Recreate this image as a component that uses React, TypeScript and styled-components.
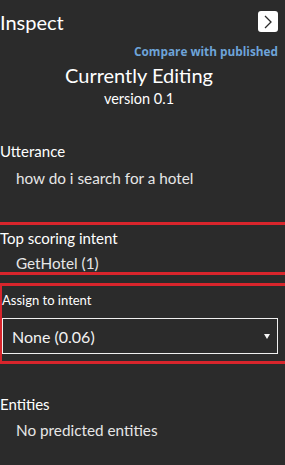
import React from 'react'
import styled, { createGlobalStyle } from 'styled-components'

const GlobalStyle = createGlobalStyle`
  html, body {
    margin: 0;
    padding: 0;
    background: #2b2b2b;
    overflow: hidden;
  }
  body {
    font-family: Lato, 'Noto Sans', sans-serif;
    color: #f2f2f2;
  }
`

const Panel = styled.div`
  width: 285px;
  height: 465px;
  box-sizing: border-box;
  padding-right: 7px;
  background: #2b2b2b;
  overflow: hidden;
`

const Header = styled.div`
  display: flex;
  align-items: center;
  justify-content: space-between;
  height: 44px;
`

const Title = styled.h1`
  margin: 0;
  font-size: 20px;
  line-height: 1;
  font-weight: 400;
  color: #ffffff;
`

const CollapseButton = styled.button`
  width: 20px;
  height: 21px;
  margin-top: -1px;
  padding: 0;
  border: none;
  border-radius: 3px;
  background: #ffffff;
  display: flex;
  align-items: center;
  justify-content: center;
  cursor: pointer;
`

const CompareLink = styled.a`
  display: block;
  text-align: right;
  font-family: 'Open Sans', sans-serif;
  font-size: 11.8px;
  line-height: 14px;
  font-weight: 700;
  color: #6ea4d9;
  text-decoration: none;
`

const Status = styled.div`
  text-align: center;
  margin-top: 3px;
`

const StatusTitle = styled.div`
  font-size: 20px;
  line-height: 28px;
  color: #ffffff;
`

const Version = styled.div`
  font-size: 14.5px;
  line-height: 20px;
  color: #ffffff;
`

const Section = styled.section<{ $gap?: number }>`
  margin-top: ${({ $gap }) => $gap ?? 0}px;
`

const Highlight = styled.section<{ $offset: number; $gap: number }>`
  margin-top: ${({ $gap }) => $gap}px;
  margin-left: ${({ $offset }) => $offset}px;
  margin-right: -10px;
  padding-right: 7px;
  border: 3px solid #d8252c;
`

const Label = styled.div<{ $small?: boolean }>`
  font-size: ${({ $small }) => ($small ? '13px' : '15px')};
  line-height: ${({ $small }) => ($small ? '16px' : '20px')};
  color: #ffffff;
`

const Value = styled.div<{ $tight?: boolean }>`
  margin-top: 6px;
  padding-left: 16px;
  font-size: 15.3px;
  line-height: ${({ $tight }) => ($tight ? '18px' : '20px')};
  color: #e6e6e6;
`

const SelectBox = styled.div`
  margin-top: 10px;
  height: 36px;
  box-sizing: border-box;
  border: 1px solid #f0f0f0;
  display: flex;
  align-items: center;
  justify-content: space-between;
  padding: 0 7px 0 9px;
  font-size: 16px;
  color: #f2f2f2;
`

const Caret = styled.span`
  width: 0;
  height: 0;
  border-left: 3px solid transparent;
  border-right: 3px solid transparent;
  border-top: 5px solid #f5f5f5;
`

const App: React.FC = () => {
  return (
    <>
      <GlobalStyle />
      <Panel>
        <Header>
          <Title>Inspect</Title>
          <CollapseButton aria-label="Collapse">
            <svg width="8" height="14" viewBox="0 0 8 14">
              <path d="M1 1 L7 7 L1 13" fill="none" stroke="#2b2b2b" strokeWidth="1.3" />
            </svg>
          </CollapseButton>
        </Header>
        <CompareLink href="#">Compare with published</CompareLink>
        <Status>
          <StatusTitle>Currently Editing</StatusTitle>
          <Version>version 0.1</Version>
        </Status>

        <Section $gap={32}>
          <Label>Utterance</Label>
          <Value style={{ marginTop: 7 }}>how do i search for a hotel</Value>
        </Section>

        <Highlight $offset={-3} $gap={34}>
          <Label style={{ paddingTop: 3 }}>Top scoring intent</Label>
          <Value $tight>GetHotel (1)</Value>
        </Highlight>

        <Highlight $offset={-1} $gap={8}>
          <Label $small style={{ paddingTop: 6 }}>Assign to intent</Label>
          <SelectBox>
            <span>None (0.06)</span>
            <Caret />
          </SelectBox>
          <div style={{ height: 7 }} />
        </Highlight>

        <Section $gap={30}>
          <Label>Entities</Label>
          <Value>No predicted entities</Value>
        </Section>
      </Panel>
    </>
  )
}

export default App
